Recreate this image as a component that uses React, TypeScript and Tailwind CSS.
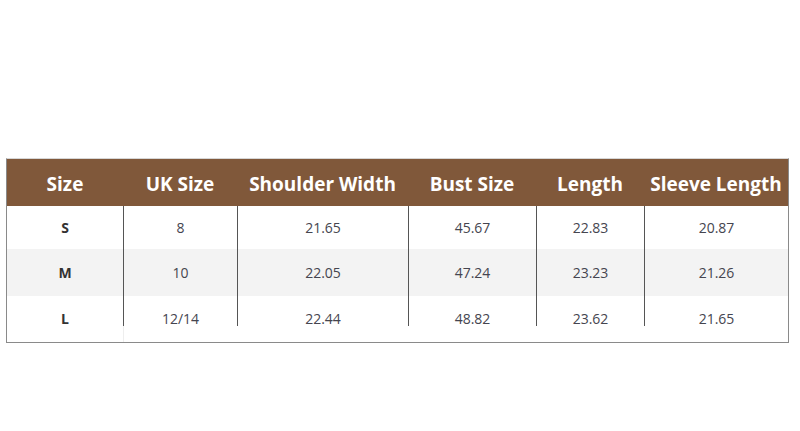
const headers = ["Size", "UK Size", "Shoulder Width", "Bust Size", "Length", "Sleeve Length"];

const widths = ["w-[116px]", "w-[114px]", "w-[171px]", "w-[128px]", "w-[108px]", "flex-1"];

const rows = [
  ["S", "8", "21.65", "45.67", "22.83", "20.87"],
  ["M", "10", "22.05", "47.24", "23.23", "21.26"],
  ["L", "12/14", "22.44", "48.82", "23.62", "21.65"],
];

const App = () => {
  return (
    <div className="w-[800px] h-[431px] bg-white pt-[158px] pl-[6px]">
      <div className="w-[783px] border border-[#8a8a8a] border-t-[#d6d6d6] bg-white">
        {/* Header */}
        <div className="flex h-[47px] bg-[#80583a] font-['Open_Sans',sans-serif] font-bold text-[19px] text-white">
          {headers.map((h, i) => (
            <div key={h} className={`${widths[i]} flex items-center justify-center pt-[4px]`}>
              {h}
            </div>
          ))}
        </div>

        {/* Body */}
        <div className="font-['Open_Sans',sans-serif] text-[14px] text-[#45454f]">
          {rows.map((row, r) => (
            <div
              key={row[0]}
              className={
                r === 1
                  ? "flex h-[47px] bg-[#f3f3f3]"
                  : r === 0
                  ? "flex h-[43px] bg-white"
                  : "flex h-[46px] bg-white"
              }
            >
              {row.map((cell, i) => (
                <div key={i} className={`${widths[i]} flex flex-col`}>
                  <div
                    className={
                      (r === 2 ? "h-[30px] items-start pt-[13px] " : "flex-1 items-center ") +
                      "flex justify-center " +
                      (i > 0 ? "border-l border-[#555]" : "") +
                      (i === 0 ? " font-bold text-[#333]" : "")
                    }
                  >
                    <span className="leading-[19px]">{cell}</span>
                  </div>
                  {r === 2 && (
                    <div className={"flex-1 " + (i === 1 ? "border-l border-[#eeeeee]" : "")} />
                  )}
                </div>
              ))}
            </div>
          ))}
        </div>
      </div>
    </div>
  );
};

export default App;
